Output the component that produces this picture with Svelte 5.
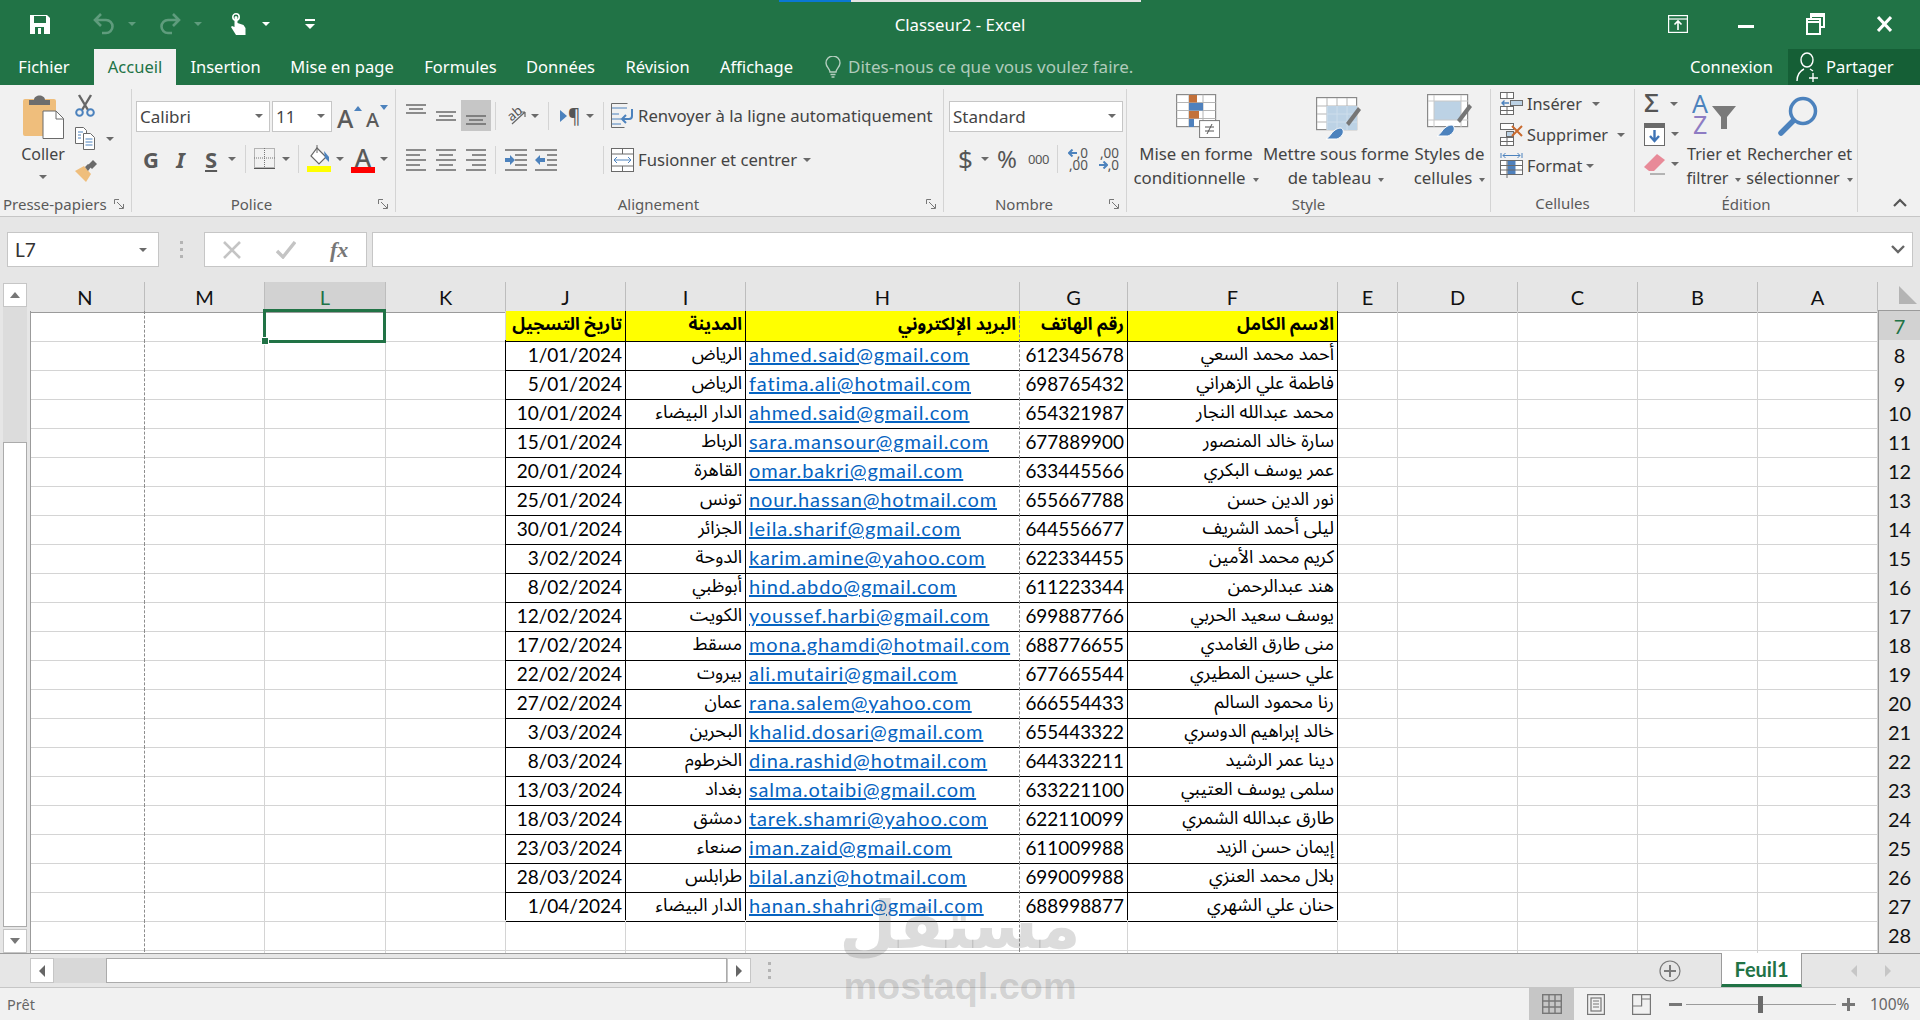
<script>
  const cols = ['N','M','L','K','J','I','H','G','F','E','D','C','B','A'];
  const head = ['تاريخ التسجيل','المدينة','البريد الإلكتروني','رقم الهاتف','الاسم الكامل'];
  const data = [
    ['1/01/2024','الرياض','ahmed.said@gmail.com','612345678','أحمد محمد السعي'],
    ['5/01/2024','الرياض','fatima.ali@hotmail.com','698765432','فاطمة علي الزهراني'],
    ['10/01/2024','الدار البيضاء','ahmed.said@gmail.com','654321987','محمد عبدالله النجار'],
    ['15/01/2024','الرباط','sara.mansour@gmail.com','677889900','سارة خالد المنصور'],
    ['20/01/2024','القاهرة','omar.bakri@gmail.com','633445566','عمر يوسف البكري'],
    ['25/01/2024','تونس','nour.hassan@hotmail.com','655667788','نور الدين حسن'],
    ['30/01/2024','الجزائر','leila.sharif@gmail.com','644556677','ليلى أحمد الشريف'],
    ['3/02/2024','الدوحة','karim.amine@yahoo.com','622334455','كريم محمد الأمين'],
    ['8/02/2024','أبوظبي','hind.abdo@gmail.com','611223344','هند عبدالرحمن'],
    ['12/02/2024','الكويت','youssef.harbi@gmail.com','699887766','يوسف سعيد الحربي'],
    ['17/02/2024','مسقط','mona.ghamdi@hotmail.com','688776655','منى طارق الغامدي'],
    ['22/02/2024','بيروت','ali.mutairi@gmail.com','677665544','علي حسين المطيري'],
    ['27/02/2024','عمان','rana.salem@yahoo.com','666554433','رنا محمود السالم'],
    ['3/03/2024','البحرين','khalid.dosari@gmail.com','655443322','خالد إبراهيم الدوسري'],
    ['8/03/2024','الخرطوم','dina.rashid@hotmail.com','644332211','دينا عمر الرشيد'],
    ['13/03/2024','بغداد','salma.otaibi@gmail.com','633221100','سلمى يوسف العتيبي'],
    ['18/03/2024','دمشق','tarek.shamri@yahoo.com','622110099','طارق عبدالله الشمري'],
    ['23/03/2024','صنعاء','iman.zaid@gmail.com','611009988','إيمان حسن الزيد'],
    ['28/03/2024','طرابلس','bilal.anzi@hotmail.com','699009988','بلال محمد العنزي'],
    ['1/04/2024','الدار البيضاء','hanan.shahri@gmail.com','688998877','حنان علي الشهري']
  ];
  const rows = [7, ...data.map((_, i) => i + 8), 28, 29];
  function cellText(r, c) {
    if (c < 4 || c > 8) return '';
    if (r === 7) return head[c - 4];
    if (r >= 8 && r <= 27) return data[r - 8][c - 4];
    return '';
  }
  function cellClass(r, c) {
    let k = 'c';
    if (c === 0) k += ' pb';
    if (c === 6) k += ' pb';
    const inTable = r >= 7 && r <= 27;
    if (inTable && c >= 4 && c <= 8) {
      k += r === 7 ? ' yellow' : '';
      k += ' tb';
      if (c !== 6) k += ' tr';
      if (r === 7) k += ' hd';
      else if (c === 5 || c === 8) k += ' ar';
      else if (c === 4) k += ' date';
      else if (c === 7) k += ' num';
      else if (c === 6) k += ' mail';
    }
    if (c === 3 && r >= 8 && r <= 27) k += ' tr';
    return k;
  }
</script>

<div class="app">
  <header class="title">
    <div class="strip"></div>
    <div class="titlerow">
      <div class="qat">
        <svg class="ml-30" width="20" height="20" viewBox="0 0 20 20"><path d="M0 1h17l3 3v16H0z" fill="#fff"/><rect x="4" y="2" width="12" height="7" fill="#217346"/><rect x="5" y="13" width="9" height="7" fill="#217346"/><rect x="8" y="14" width="3" height="6" fill="#fff"/></svg>
        <svg class="ml-43" width="21" height="22" viewBox="0 0 21 22" fill="none" stroke="#5f9c7d" stroke-width="2.600"><path d="M8 1 2 7l6 6M2 7h11a6 6 0 0 1 0 13H9"/></svg>
        <i class="caret dim ml-14"></i>
        <svg class="ml-24" width="21" height="22" viewBox="0 0 21 22" fill="none" stroke="#5f9c7d" stroke-width="2.600"><path d="m13 1 6 6-6 6M19 7H8a6 6 0 0 0 0 13h4"/></svg>
        <i class="caret dim ml-13"></i>
        <svg class="ml-28" width="17" height="22" viewBox="0 0 17 22"><circle cx="6" cy="4" r="3.200" fill="none" stroke="#fff" stroke-width="1.600"/><path d="M4.500 4.500a1.500 1.500 0 0 1 3 0V10l6 2 2 3v7H6L1 14l1-1 2.500 1z" fill="#fff"/></svg>
        <i class="caret white ml-15"></i>
        <svg class="ml-35" width="10" height="12" viewBox="0 0 10 12" fill="#fff"><rect x="0" y="1" width="10" height="2"/><path d="M0 6h10l-5 5z"/></svg>
      </div>
      <div class="doc">Classeur2 - Excel</div>
      <div class="win">
        <svg width="20" height="18" viewBox="0 0 20 18" fill="none" stroke="#fff" stroke-width="1.200"><rect x=".6" y=".6" width="18.800" height="16.800"/><path d="M1 4h18"/><path d="M10 15V6M6.500 9.500 10 6l3.500 3.500" stroke-width="1.600"/></svg>
        <i class="wmin ml-50"></i>
        <svg class="ml-52" width="19" height="22" viewBox="0 0 19 22" fill="none" stroke="#fff" stroke-width="2"><path d="M5 5V1h13v13h-4"/><rect x="1" y="6" width="13" height="15"/><path d="M1 9h13M5 3h13"/></svg>
        <svg class="ml-52" width="15" height="16" viewBox="0 0 15 16" stroke="#fff" stroke-width="3"><path d="M1 1l13 14M14 1 1 15"/></svg>
      </div>
    </div>
    <nav class="tabs">
      <span class="tab t-fichier">Fichier</span>
      <span class="tab t-accueil">Accueil</span>
      <span class="tab t-ins">Insertion</span>
      <span class="tab t-mise">Mise en page</span>
      <span class="tab t-form">Formules</span>
      <span class="tab t-don">Données</span>
      <span class="tab t-rev">Révision</span>
      <span class="tab t-aff">Affichage</span>
      <svg class="ml-18" width="16" height="22" viewBox="0 0 16 22" fill="none" stroke="#b5cfc0" stroke-width="1.400"><path d="M5 16c0-3-4-5-4-9a7 7 0 0 1 14 0c0 4-4 6-4 9z"/><path d="M5.500 18.500h5M6.500 21h3" stroke-width="1.600"/></svg>
      <span class="tell">Dites-nous ce que vous voulez faire.</span>
      <span class="conn">Connexion</span>
      <span class="share">
        <svg width="24" height="30" viewBox="0 0 24 30" fill="none" stroke="#fff" stroke-width="1.400"><ellipse cx="11" cy="8" rx="6" ry="7"/><path d="M1 29c0-7 3-10 7-12M14 17l3 2M17 21v9M13 26h9"/></svg>
        <span>Partager</span>
      </span>
    </nav>
  </header>

  <section class="ribbon">
    <div class="group g-clip">
      <div class="body clip">
        <div class="coller">
          <svg width="41" height="45" viewBox="0 0 41 45"><rect x="0" y="5" width="33" height="37" rx="2" fill="#efbe7c"/><path d="M6 6h5c0-6 11-6 11 0h5v5H6z" fill="#6d6d6d"/><path d="M20 17h13l7.500 7.500V44.500H20z" fill="#fff" stroke="#6a6a6a"/><path d="M33 17v8h7.500" fill="none" stroke="#6a6a6a"/></svg>
          <span class="cl">Coller</span>
          <i class="caret"></i>
        </div>
        <div class="clip-small">
          <svg width="20" height="23" viewBox="0 0 20 23" fill="none"><path d="M4 1l9 15M16 1 7 16" stroke="#666" stroke-width="2.400"/><circle cx="4.500" cy="18.500" r="3.300" stroke="#4c82bd" stroke-width="2"/><circle cx="15.500" cy="18.500" r="3.300" stroke="#4c82bd" stroke-width="2"/></svg>
          <div class="copy">
            <svg width="20" height="23" viewBox="0 0 20 23" fill="#fff" stroke="#6a6a6a"><path d="M.5.500h8l3 3v13H.5z"/><path d="M8.500 6.500h7l4 4v12h-11z"/><path d="M3 5h5M3 8h3M3 11h3" stroke="#4c82bd"/><path d="M10.500 12h7M10.500 15h7M10.500 18h7" stroke="#4c82bd"/></svg>
            <i class="caret ml-11"></i>
          </div>
          <svg width="23" height="22" viewBox="0 0 23 22"><path d="M0 11 9 6l7 8-5 8z" fill="#efbe7c"/><path d="m10 7 3-3 3 3-3 4zM13 5l5-5 4 4-5 5z" fill="#6a6a6a"/></svg>
        </div>
      </div>
      <footer class="glabel">Presse-papiers<svg class="launch" width="11" height="11" viewBox="0 0 11 11" fill="none" stroke="#777"><path d="M.5 5V.5H5M3 3l6 6M9.500 5v4.500H5"/></svg></footer>
    </div>

    <div class="group g-police">
      <div class="body">
        <div class="rowtop r1">
          <span class="box fontbox ml-4">Calibri<i class="caret"></i></span>
          <span class="box sizebox ml-2">11<i class="caret"></i></span>
          <span class="growa ml-5">A<svg class="tri" width="8" height="5" viewBox="0 0 8 5"><path d="M0 5h8L4 0z" fill="#4c82bd"/></svg></span>
          <span class="shrinka ml-12">A<svg class="tri" width="8" height="5" viewBox="0 0 8 5"><path d="M0 0h8L4 5z" fill="#4c82bd"/></svg></span>
        </div>
        <div class="rowbot">
          <span class="fmt b ml-11">G</span>
          <span class="fmt it ml-17">I</span>
          <span class="fmt u ml-19">S</span>
          <i class="caret ml-12"></i>
          <i class="vsep ml-9"></i>
          <svg class="ml-8" width="21" height="21" viewBox="0 0 21 21" fill="none" stroke="#777" stroke-dasharray="1 1"><rect x=".5" y=".5" width="20" height="19"/><path d="M10.500 0v20M0 10h21"/><path d="M0 20.500h21" stroke-dasharray="none" stroke="#555"/></svg>
          <i class="caret ml-7"></i>
          <i class="vsep ml-8"></i>
          <svg class="ml-8" width="24" height="28" viewBox="0 0 24 28"><path d="m10 3 9 9-7 7-8-8z" fill="#fff" stroke="#666" stroke-width="1.200"/><path d="M10 0v8" stroke="#666"/><path d="m17 6 5 6v5l-4-4z" fill="#4c82bd"/><rect y="21" width="24" height="6" fill="#ff0"/></svg>
          <i class="caret ml-5"></i>
          <span class="colA ml-7">A<i class="redbar"></i></span>
          <i class="caret ml-5"></i>
        </div>
      </div>
      <footer class="glabel">Police<svg class="launch" width="11" height="11" viewBox="0 0 11 11" fill="none" stroke="#777"><path d="M.5 5V.5H5M3 3l6 6M9.500 5v4.500H5"/></svg></footer>
    </div>

    <div class="group g-align">
      <div class="body">
        <div class="rowtop">
          <svg class="ml-10 al-t" width="20" height="10" viewBox="0 0 20 10" stroke="#6a6a6a" stroke-width="1.500"><path d="M0 1h20M3 5h14M0 9h20"/></svg>
          <svg class="ml-10 al-m" width="20" height="10" viewBox="0 0 20 10" stroke="#6a6a6a" stroke-width="1.500"><path d="M0 1h20M3 5h14M0 9h20"/></svg>
          <span class="activeb ml-5"><svg width="20" height="10" viewBox="0 0 20 10" stroke="#6a6a6a" stroke-width="1.500"><path d="M0 1h20M3 5h14M0 9h20"/></svg></span>
          <i class="vsep ml-4"></i>
          <svg class="ml-11 orient" width="20" height="22" viewBox="0 0 20 22"><text x="1" y="13" font-size="13" font-family="'Noto Sans',sans-serif" fill="#555" transform="rotate(-40 8 10)">ab</text><path d="M5 19 18 7M18 7v5M18 7h-5" fill="none" stroke="#666" stroke-width="1.200"/></svg>
          <i class="caret ml-4"></i>
          <i class="vsep ml-9"></i>
          <span class="pil ml-11"><svg width="7" height="12" viewBox="0 0 7 12"><path d="M0 0l7 6-7 6z" fill="#4c82bd"/></svg>¶</span>
          <i class="caret ml-6"></i>
          <i class="vsep ml-9"></i>
          <svg class="ml-7" width="23" height="26" viewBox="0 0 23 26" fill="none" stroke="#6a6a6a"><path d="M.5.500h16M.5.500v24h13"/><path d="M1 5h15M1 11h7M1 16h9M1 21h9" stroke="#4c82bd"/><path d="M21 6v7a3 3 0 0 1-3 3h-6" stroke="#4c82bd" stroke-width="2"/><path d="m15 12-4 4 4 4" stroke="#4c82bd" stroke-width="2"/></svg>
          <span class="lbl w294 ml-4">Renvoyer à la ligne automatiquement</span>
        </div>
        <div class="rowbot down1">
          <svg class="ml-10" width="20" height="22" viewBox="0 0 20 22" stroke="#6a6a6a" stroke-width="1.500"><path d="M0 1h20M0 6h14M0 11h20M0 16h14M0 21h20"/></svg>
          <svg class="ml-10" width="20" height="22" viewBox="0 0 20 22" stroke="#6a6a6a" stroke-width="1.500"><path d="M0 1h20M3 6h14M0 11h20M3 16h14M0 21h20"/></svg>
          <svg class="ml-10" width="20" height="22" viewBox="0 0 20 22" stroke="#6a6a6a" stroke-width="1.500"><path d="M0 1h20M6 6h14M0 11h20M6 16h14M0 21h20"/></svg>
          <i class="vsep ml-9"></i>
          <svg class="ml-9" width="22" height="22" viewBox="0 0 22 22"><path d="M0 1h22M10 6h12M10 11h12M10 16h12M0 21h22" stroke="#6a6a6a" stroke-width="1.500"/><path d="M0 9h5V6l5 5-5 5v-3H0z" fill="#4c82bd"/></svg>
          <svg class="ml-8" width="22" height="22" viewBox="0 0 22 22"><path d="M0 1h22M12 6h10M12 11h10M12 16h10M0 21h22" stroke="#6a6a6a" stroke-width="1.500"/><path d="M10 9H5V6l-5 5 5 5v-3h5z" fill="#4c82bd"/></svg>
          <i class="vsep ml-46"></i>
          <svg class="ml-7" width="23" height="24" viewBox="0 0 23 24" fill="#fff" stroke="#6a6a6a"><rect x=".5" y=".5" width="22" height="23"/><path d="M11.500 0v6M11.500 18v6M0 6h23M0 18h23"/><path d="M3 12h17M6 9l-3 3 3 3M17 9l3 3-3 3" stroke="#4c82bd" fill="none"/></svg>
          <span class="lbl w156 ml-4">Fusionner et centrer</span>
          <i class="caret ml-9"></i>
        </div>
      </div>
      <footer class="glabel">Alignement<svg class="launch" width="11" height="11" viewBox="0 0 11 11" fill="none" stroke="#777"><path d="M.5 5V.5H5M3 3l6 6M9.500 5v4.500H5"/></svg></footer>
    </div>

    <div class="group g-num">
      <div class="body">
        <div class="rowtop r1">
          <span class="box stdbox ml-5">Standard<i class="caret"></i></span>
        </div>
        <div class="rowbot">
          <span class="dollar ml-14">$</span>
          <i class="caret ml-9"></i>
          <span class="pct ml-8">%</span>
          <span class="mil ml-11">000</span>
          <i class="vsep ml-8"></i>
          <span class="dec ml-9"><span class="decrow"><svg width="9" height="8" viewBox="0 0 9 8" fill="none" stroke="#4c82bd" stroke-width="2"><path d="M9 4H1M4.500.5 1 4l3.500 3.500"/></svg>,0</span><span class="decrow">,00</span></span>
          <span class="dec ml-10"><span class="decrow">,00</span><span class="decrow"><svg width="9" height="8" viewBox="0 0 9 8" fill="none" stroke="#4c82bd" stroke-width="2"><path d="M0 4h8M4.500.5 8 4 4.500 7.500"/></svg>,0</span></span>
        </div>
      </div>
      <footer class="glabel">Nombre<svg class="launch" width="11" height="11" viewBox="0 0 11 11" fill="none" stroke="#777"><path d="M.5 5V.5H5M3 3l6 6M9.500 5v4.500H5"/></svg></footer>
    </div>

    <div class="group g-style">
      <div class="body styles">
        <div class="big s1">
          <span class="ic">
            <svg width="44" height="44" viewBox="0 0 44 44"><g fill="#fff" stroke="#8a8a8a" stroke-width="1.200"><rect x=".6" y=".6" width="39" height="32"/></g><path d="M13 .6v32M27 .6v32M.6 8.500h39M.6 16.500h39M.6 24.500h39" stroke="#b5b5b5"/><rect x="13" y="1" width="8" height="7.500" fill="#c3713a"/><rect x="13" y="9" width="14" height="7.500" fill="#4f81bd"/><rect x="13" y="17" width="10" height="7.500" fill="#c3713a"/><rect x="13" y="25" width="5" height="8" fill="#4f81bd"/><rect x="23.600" y="26.600" width="20" height="17" fill="#fff" stroke="#777"/><path d="M29 33h9M29 37h9M36 30l-5 10" stroke="#555" fill="none"/></svg>
          </span>
          <span class="ln">Mise en forme</span>
          <span class="ln">conditionnelle<i class="caret sm"></i></span>
        </div>
        <div class="big s2">
          <span class="ic">
            <svg width="46" height="43" viewBox="0 0 46 43"><rect x=".6" y=".6" width="40" height="32" fill="#fff" stroke="#8a8a8a" stroke-width="1.200"/><path d="M11 1v32M21 1v32M31 1v32M1 9h40M1 17h40M1 25h40" stroke="#b5b5b5"/><path d="M11 9h30v24H11z" fill="#bcd2e5"/><path d="M11 9v24M21 9v24M31 9v24M11 17h30M11 25h30" stroke="#cdddeb"/><path d="m30 26 12-16 3 3-12 16z" fill="#767676"/><path d="M10 42c3-1 5-6 9-9 3-2 7-3 8 0s-1 7-6 9z" fill="#4c82bd" stroke="#fff"/></svg>
          </span>
          <span class="ln">Mettre sous forme</span>
          <span class="ln">de tableau<i class="caret sm"></i></span>
        </div>
        <div class="big s3">
          <span class="ic">
            <svg width="46" height="43" viewBox="0 0 46 43"><rect x=".6" y=".6" width="40" height="32" fill="#fff" stroke="#8a8a8a" stroke-width="1.200"/><rect x="7" y="7" width="27" height="19" fill="#bcd2e5"/><path d="M7 1v32M34 1v32M1 7h40M1 26h40" stroke="#c8c8c8"/><path d="m30 26 12-16 3 3-12 16z" fill="#767676"/><path d="M10 42c3-1 5-6 9-9 3-2 7-3 8 0s-1 7-6 9z" fill="#4c82bd" stroke="#fff"/></svg>
          </span>
          <span class="ln">Styles de</span>
          <span class="ln">cellules<i class="caret sm"></i></span>
        </div>
      </div>
      <footer class="glabel">Style</footer>
    </div>

    <div class="group g-cells">
      <div class="body cells">
        <div class="cellrow">
          <svg class="ml-9" width="23" height="23" viewBox="0 0 23 23" fill="#fff" stroke="#6a6a6a"><rect x=".5" y=".5" width="13" height="6"/><path d="M7 .5v6"/><rect x="10.500" y="8.500" width="12" height="5" fill="#bcd2e5"/><rect x=".5" y="14.500" width="13" height="8"/><path d="M7 14.500v8M0 18.500h13"/><path d="M9 11H2M4.500 8.500 2 11l2.500 2.500" stroke="#4c82bd" stroke-width="1.400" fill="none"/></svg>
          <span class="lbl ml-4">Insérer</span><i class="caret ml-10"></i>
        </div>
        <div class="cellrow">
          <svg class="ml-9" width="23" height="23" viewBox="0 0 23 23" fill="#fff" stroke="#6a6a6a"><rect x=".5" y=".5" width="13" height="6"/><rect x="6.500" y="8.500" width="7" height="5" fill="#bcd2e5"/><rect x=".5" y="14.500" width="13" height="8"/><path d="M7 14.500v8M0 18.500h13"/><path d="m12 3 10 10M22 3 12 13" stroke="#c96a2e" stroke-width="2" fill="none"/></svg>
          <span class="lbl ml-4">Supprimer</span><i class="caret ml-9"></i>
        </div>
        <div class="cellrow">
          <svg class="ml-9" width="23" height="25" viewBox="0 0 23 25" fill="#fff" stroke="#6a6a6a"><path d="M1 0v5M22 0v5M3 2.500h17M5.500 0 3 2.500 5.500 5M17.500 0 20 2.500 17.500 5" stroke="#4c82bd" fill="none"/><rect x=".5" y="7.500" width="22" height="14"/><rect x="7.500" y="8" width="8" height="13" fill="#4f81bd" stroke="none"/><path d="M.5 12.500h22M.5 17h22M7 7v18"/></svg>
          <span class="lbl ml-4">Format</span><i class="caret ml-4"></i>
        </div>
      </div>
      <footer class="glabel">Cellules</footer>
    </div>

    <div class="group g-edit">
      <div class="body edit">
        <div class="eda">
          <div class="edrow"><span class="sigma">Σ</span><i class="caret ml-5"></i></div>
          <div class="edrow"><svg width="21" height="23" viewBox="0 0 21 23"><rect x=".5" y=".5" width="20" height="22" fill="#fff" stroke="#6a6a6a"/><rect width="21" height="5" fill="#6a6a6a"/><path d="M10.500 7v11M6 13l4.500 5 4.500-5" fill="none" stroke="#3f74b5" stroke-width="2.400"/></svg><i class="caret ml-6"></i></div>
          <div class="edrow"><svg width="22" height="21" viewBox="0 0 22 21"><path d="M13 0l8 6-11 11H5l-5-4z" fill="#e88a98"/><path d="M6 20h15" stroke="#777"/></svg><i class="caret ml-5"></i></div>
        </div>
        <div class="big e1">
          <span class="ic up">
            <svg width="44" height="42" viewBox="0 0 44 42"><text x="0" y="19" font-size="25" font-family="'Noto Sans',sans-serif" fill="#4c82bd">A</text><text x="1" y="40" font-size="25" font-family="'Noto Sans',sans-serif" fill="#8e7cc3">Z</text><path d="M20 12h24l-9 11v12h-6V23z" fill="#7a7a7a"/></svg>
          </span>
          <span class="ln">Trier et</span>
          <span class="ln">filtrer<i class="caret sm"></i></span>
        </div>
        <div class="big e2">
          <span class="ic up">
            <svg width="40" height="40" viewBox="0 0 40 40" fill="none" stroke="#4c82bd"><circle cx="25" cy="15" r="12.500" stroke-width="3.500"/><path d="M15 25 3 37" stroke-width="5.500" stroke-linecap="round"/></svg>
          </span>
          <span class="ln">Rechercher et</span>
          <span class="ln">sélectionner<i class="caret sm"></i></span>
        </div>
      </div>
      <footer class="glabel">Édition</footer>
    </div>

    <div class="collapse">
      <svg width="14" height="9" viewBox="0 0 14 9" fill="none" stroke="#555" stroke-width="2.200"><path d="m1 8 6-6 6 6"/></svg>
    </div>
  </section>

  <section class="fbar">
    <div class="box namebox">L7<i class="caret"></i></div>
    <div class="grip"><i></i><i></i><i></i></div>
    <div class="box fxbox">
      <svg width="18" height="18" viewBox="0 0 18 18" stroke="#c4c4c4" stroke-width="2.600"><path d="m1 1 16 16M17 1 1 17"/></svg>
      <svg width="20" height="18" viewBox="0 0 20 18" fill="none" stroke="#c4c4c4" stroke-width="3.400"><path d="m1 10 6 6L19 1"/></svg>
      <span class="fx">fx</span>
    </div>
    <div class="box finput"><svg width="14" height="9" viewBox="0 0 14 9" fill="none" stroke="#666" stroke-width="2.400"><path d="m1 1 6 6 6-6"/></svg></div>
  </section>

  <section class="sheet">
    <div class="vscroll">
      <div class="sbtn"><i class="tri-u"></i></div>
      <div class="strack"></div>
      <div class="sthumb"></div>
      <div class="sbtn down"><i class="tri-d"></i></div>
    </div>
    <div class="grid">
      <div class="line hdr">
        {#each cols as col}
          <div class="ch" class:sel={col === 'L'} class:first={col === 'N'}>{col}</div>
        {/each}
        <div class="corner"><svg width="18" height="18" viewBox="0 0 18 18"><path d="M0 0l18 18H0z" fill="#b4b4b4"/></svg></div>
      </div>
      {#each rows as r}
        <div class="line">
          {#each cols as col, c}
            <div class={cellClass(r, c)}>
              {#if r === 7 && col === 'L'}<span class="cursor"><i class="handle"></i></span>{/if}
              {#if c === 6 && r > 7 && r <= 27}<span class="link">{cellText(r, c)}</span>{:else}{cellText(r, c)}{/if}
            </div>
          {/each}
          <div class="rh" class:sel={r === 7}>{r}</div>
        </div>
      {/each}
    </div>
  </section>

  <section class="sbar">
    <div class="hbtn ml-30"><i class="tri-l"></i></div>
    <div class="htrack"></div>
    <div class="hthumb"></div>
    <div class="hbtn"><i class="tri-r"></i></div>
    <div class="grip h ml-15"><i></i><i></i><i></i></div>
    <svg class="plus" width="22" height="22" viewBox="0 0 22 22" fill="none" stroke="#7a7a7a"><circle cx="11" cy="11" r="10" stroke-width="1.200"/><path d="M11 5v12M5 11h12" stroke-width="2"/></svg>
    <div class="sheettab">Feuil1</div>
    <i class="tri-l pale ml-49"></i>
    <i class="tri-r pale ml-28"></i>
  </section>

  <footer class="status">
    <span class="ready">Prêt</span>
    <span class="vbtn">
      <svg width="20" height="20" viewBox="0 0 20 20" fill="none" stroke="#777" stroke-width="1.400"><rect x=".7" y=".7" width="18.600" height="18.600"/><path d="M7 0v20M13 0v20M0 7h20M0 13h20"/></svg>
    </span>
    <svg class="ml-13" width="18" height="21" viewBox="0 0 18 21" fill="none" stroke="#777" stroke-width="1.200"><rect x=".6" y=".6" width="16.800" height="19.800"/><rect x="4" y="4" width="10" height="13"/><path d="M6 7h6M6 10h6M6 13h6"/></svg>
    <svg class="ml-27" width="19" height="21" viewBox="0 0 19 21" fill="none" stroke="#777" stroke-width="1.200"><path d="M.6.600h17.800v19.800H.6zM.6 12h9V.6M9.600 5h9"/></svg>
    <i class="zm ml-18"></i>
    <div class="slider ml-4"><i class="thumb"></i></div>
    <span class="zp ml-6"></span>
    <span class="pctz ml-15">100%</span>
  </footer>

  <div class="mark"><span class="mk-ar">مستقل</span><span class="mk-en">mostaql.com</span></div>
</div>

<style>
  :global(body) { margin: 0; background: #e6e6e6; }
  .app {
    position: relative; width: 1920px; height: 1020px; overflow: hidden;
    display: flex; flex-direction: column;
    font-family: "Noto Sans", sans-serif; font-size: 15.500px; color: #444;
    background: #e6e6e6;
  }
  i { display: block; font-style: normal; }
  svg { display: block; flex: none; }

  .ml-2 { margin-left: 2px; } .ml-4 { margin-left: 4px; } .ml-5 { margin-left: 5px; }
  .ml-6 { margin-left: 6px; } .ml-7 { margin-left: 7px; } .ml-8 { margin-left: 8px; }
  .ml-9 { margin-left: 9px; } .ml-10 { margin-left: 10px; } .ml-11 { margin-left: 11px; }
  .ml-12 { margin-left: 12px; } .ml-13 { margin-left: 13px; } .ml-14 { margin-left: 14px; }
  .ml-15 { margin-left: 15px; } .ml-17 { margin-left: 17px; } .ml-18 { margin-left: 18px; }
  .ml-19 { margin-left: 19px; } .ml-24 { margin-left: 24px; } .ml-27 { margin-left: 27px; }
  .ml-28 { margin-left: 28px; } .ml-30 { margin-left: 30px; } .ml-35 { margin-left: 35px; }
  .ml-43 { margin-left: 43px; } .ml-46 { margin-left: 46px; } .ml-49 { margin-left: 49px; }
  .ml-50 { margin-left: 50px; } .ml-52 { margin-left: 52px; }

  .caret {
    flex: none; width: 0; height: 0;
    border-left: 4px solid transparent; border-right: 4px solid transparent;
    border-top: 4.500px solid #6a6a6a;
  }
  .caret.dim { border-top-color: #5f9c7d; }
  .caret.white { border-top-color: #fff; }
  .caret.sm { display: inline-block; vertical-align: middle; margin-left: 7px; border-left-width: 3.500px; border-right-width: 3.500px; border-top-width: 4px; }
  .vsep { flex: none; width: 1px; height: 28px; background: #d4d4d4; }

  /* Title */
  .title { background: #217346; color: #fff; flex: none; height: 85px; }
  .strip { height: 2px; width: 362px; margin-left: 779px; background: linear-gradient(90deg, #0a78d4 0 72px, #e4e4e4 72px); }
  .titlerow { height: 47px; display: grid; grid-template-columns: 1fr auto 1fr; align-items: center; padding-bottom: 4px; box-sizing: border-box; }
  .qat { display: flex; align-items: center; }
  .doc { font-size: 16.800px; padding-top: 2px; }
  .win { display: flex; align-items: center; justify-content: flex-end; padding-right: 28px; }
  .wmin { width: 16px; height: 3px; background: #fff; margin-top: 6px; }
  .tabs { height: 36px; display: flex; align-items: center; font-size: 16.500px; }
  .tab { display: flex; align-items: center; justify-content: center; height: 100%; flex: none; padding-bottom: 1px; box-sizing: border-box; }
  .t-fichier { width: 88px; margin-right: 6px; }
  .t-accueil { width: 82px; background: #f1f1f1; color: #217346; }
  .t-ins { width: 99px; } .t-mise { width: 134px; } .t-form { width: 103px; }
  .t-don { width: 97px; } .t-rev { width: 97px; } .t-aff { width: 101px; }
  .tell { margin-left: 7px; color: #b0cbbb; font-size: 17px; padding-bottom: 2px; }
  .conn { margin-left: auto; margin-right: 15px; padding-bottom: 2px; }
  .share { width: 132px; height: 100%; background: #155f36; display: flex; align-items: center; gap: 6px; padding: 0 0 1px 8px; box-sizing: border-box; }

  /* Ribbon */
  .ribbon { flex: none; height: 132px; box-sizing: border-box; background: #f1f1f1; border-bottom: 1px solid #c6c6c6; display: flex; }
  .group { flex: none; box-sizing: border-box; height: 123px; margin-top: 4px; border-right: 1px solid #d4d4d4; display: flex; flex-direction: column; }
  .g-clip { width: 132px; } .g-police { width: 264px; } .g-align { width: 548px; }
  .g-num { width: 183px; } .g-style { width: 364px; } .g-cells { width: 144px; } .g-edit { width: 223px; }
  .body { height: 104px; flex: none; }
  .glabel { height: 19px; line-height: 22px; text-align: center; position: relative; font-size: 15px; color: #5a5a5a; }
  .launch { position: absolute; right: 6px; top: 6px; }
  .g-clip .glabel { text-align: left; padding-left: 3px; }
  .g-police .glabel { padding-right: 24px; }
  .g-align .glabel { padding-right: 22px; }
  .g-num .glabel { padding-right: 22px; }

  .clip { display: flex; padding-top: 5px; box-sizing: border-box; }
  .coller { width: 60px; margin-left: 13px; display: flex; flex-direction: column; align-items: center; }
  .cl { height: 24px; line-height: 24px; margin-top: 3px; font-size: 16px; }
  .coller .caret { margin-top: 9px; }
  .clip-small { margin-left: 2px; display: flex; flex-direction: column; gap: 10px; }
  .copy { display: flex; align-items: center; }

  .rowtop { display: flex; align-items: center; height: 31px; margin-top: 11px; }
  .rowtop.r1 { margin-top: 12px; }
  .rowbot { display: flex; align-items: center; height: 31px; margin-top: 12px; }
  .rowbot.down1 { margin-top: 13px; }
  .r1 + .rowbot { margin-top: 11px; }
  .box { background: #fff; border: 1px solid #c6c6c6; box-sizing: border-box; display: flex; align-items: center; justify-content: space-between; flex: none; color: #444; }
  .fontbox, .sizebox, .stdbox { height: 31px; padding: 0 6px 0 3px; font-size: 17px; color: #444; }
  .fontbox .caret, .sizebox .caret, .stdbox .caret { margin-top: -2px; }
  .fontbox { width: 134px; } .sizebox { width: 60px; } .stdbox { width: 174px; }
  .growa, .shrinka { position: relative; font-weight: 500; line-height: 1; color: #5a5a5a; }
  .growa { font-size: 25px; width: 17px; margin-top: 3px; }
  .shrinka { font-size: 20px; width: 14px; margin-top: 7px; }
  .tri { position: absolute; left: 100%; top: 0; }
  .shrinka .tri { top: -5px; }
  .fmt { font-size: 22px; color: #595959; text-align: center; line-height: 1; }
  .b { width: 15px; font-weight: 700; }
  .it { width: 11px; font-style: italic; font-weight: 700; }
  .u { width: 11px; font-weight: 700; text-decoration: underline; }
  .colA { position: relative; width: 24px; text-align: center; font-size: 25px; line-height: 24px; font-weight: 500; color: #595959; height: 28px; }
  .redbar { position: absolute; left: 0; bottom: 0; width: 24px; height: 6px; background: #f00; }

  .al-t { margin-top: -13px; } .al-m { margin-top: 0; }
  .orient { overflow: visible; }
  .activeb { width: 30px; height: 31px; background: #c6c6c6; display: flex; justify-content: center; align-items: flex-end; padding-bottom: 6px; box-sizing: border-box; flex: none; }
  .pil { width: 20px; display: flex; align-items: center; font-size: 19px; color: #555; gap: 1px; }
  .lbl { flex: none; font-size: 16.300px; color: #444; white-space: nowrap; }
  .w294 { width: 294px; font-size: 16.700px; } .w156 { width: 156px; font-size: 16.700px; }

  .dollar { width: 14px; font-size: 26px; color: #555; text-align: center; line-height: 1; }
  .pct { width: 20px; font-size: 24px; color: #555; text-align: center; line-height: 1; }
  .mil { width: 21px; font-size: 13px; color: #555; text-align: center; letter-spacing: -.4px; }
  .dec { width: 21px; display: flex; flex-direction: column; align-items: flex-end; font-size: 13.500px; line-height: 12px; color: #555; }
  .decrow { display: flex; align-items: center; }

  .styles { display: flex; padding-left: 3px; box-sizing: border-box; }
  .big { flex: none; display: flex; flex-direction: column; align-items: center; white-space: nowrap; font-size: 16.800px; }
  .s1 { width: 132px; } .s2 { width: 148px; } .s3 { width: 79px; }
  .s1 .ic { padding: 0 0 4px 4px; }
  .s2 .ic { padding-left: 5px; }
  .s3 .ic { padding-bottom: 5px; }
  .ic { height: 53px; display: flex; align-items: flex-end; padding-bottom: 2px; box-sizing: border-box; }
  .ic.up { padding-bottom: 6px; }
  .e2 .ic { padding-right: 3px; }
  .ln { height: 24px; line-height: 24px; }

  .cells { display: flex; flex-direction: column; margin-top: -1px; }
  .cellrow { height: 31px; display: flex; align-items: center; }
  .edit { display: flex; }
  .eda { width: 49px; padding-left: 9px; box-sizing: border-box; flex: none; }
  .edrow { height: 30px; display: flex; align-items: center; }
  .sigma { width: 21px; font-size: 26px; line-height: 1; color: #555; font-weight: 500; margin-top: -4px; }
  .e1 { width: 60px; font-size: 16.200px; } .e2 { width: 111px; font-size: 16.200px; }
  .collapse { flex: 1; display: flex; justify-content: flex-end; align-items: flex-end; padding: 0 13px 9px 0; }

  /* Formula bar */
  .fbar { flex: none; height: 65px; display: flex; padding: 15px 7px 15px 7px; box-sizing: border-box; }
  .namebox { width: 152px; padding: 0 11px 0 7px; font-size: 19px; font-family: Lato, sans-serif; color: #333; }
  .grip { width: 45px; display: flex; flex-direction: column; align-items: center; justify-content: center; gap: 4px; }
  .grip i { width: 3px; height: 3px; background: #b4b4b4; }
  .grip.h { width: 6px; }
  .fxbox { width: 163px; justify-content: flex-start; gap: 35px; padding-left: 18px; }
  .fx { font-family: "Liberation Serif", serif; font-style: italic; font-weight: 700; font-size: 22px; color: #777; margin-left: -1px; }
  .finput { flex: 1; margin-left: 5px; justify-content: flex-end; padding-right: 7px; }

  /* Sheet */
  .sheet { flex: none; height: 671px; display: flex; overflow: hidden; }
  .vscroll { width: 30px; box-sizing: border-box; padding: 1px 3px 0 3px; flex: none; display: flex; flex-direction: column; }
  .sbtn { height: 24px; flex: none; background: #fff; border: 1px solid #c6c6c6; box-sizing: border-box; display: flex; align-items: center; justify-content: center; }
  .sbtn.down { margin-top: 2px; }
  .strack { height: 135px; flex: none; background: #dcdcdc; }
  .sthumb { flex: 1; background: #fff; border: 1px solid #ababab; box-sizing: border-box; }
  .tri-u, .tri-d, .tri-l, .tri-r { width: 0; height: 0; flex: none; }
  .tri-u { border-left: 5.500px solid transparent; border-right: 5.500px solid transparent; border-bottom: 6px solid #777; }
  .tri-d { border-left: 5.500px solid transparent; border-right: 5.500px solid transparent; border-top: 6px solid #777; }
  .tri-l { border-top: 6px solid transparent; border-bottom: 6px solid transparent; border-right: 6px solid #666; }
  .tri-r { border-top: 6px solid transparent; border-bottom: 6px solid transparent; border-left: 6px solid #666; }
  .tri-l.pale { border-right-color: #c6c6c6; }
  .tri-r.pale { border-left-color: #c6c6c6; }

  .grid { flex: none; width: 1890px; box-sizing: border-box; }
  .line { display: grid; height: 29px; grid-template-columns: 115px 120px 121px 120px 120px 120px 274px 108px 210px 60px 120px 120px 120px 120px 42px; background: #fff; }
  .hdr { background: #e6e6e6; }
  .ch { box-sizing: border-box; border-right: 1px solid #bdbdbd; border-bottom: 1px solid #9b9b9b; font-family: Lato, sans-serif; font-size: 20px; color: #111; text-align: center; line-height: 30px; background: #e6e6e6; }
  .ch.first { padding-right: 4px; }
  .ch.sel { background: #d2d2d2; color: #217346; }
  .corner { display: flex; justify-content: flex-end; align-items: flex-end; padding: 0 3px 6px 0; border-bottom: 1px solid #9b9b9b; box-sizing: border-box; height: 29px; overflow: hidden; background: #e6e6e6; }

  .c {
    position: relative; box-sizing: border-box; min-width: 0;
    border-right: 1px solid #d4d4d4; border-bottom: 1px solid #d4d4d4;
    font-family: Lato, "Noto Sans Arabic", sans-serif; font-size: 18.800px; color: #000;
    line-height: 29px; white-space: nowrap; text-align: right; padding: 0 3px; overflow: visible;
  }
  .line > .c:first-child { border-left: 1px solid #9b9b9b; }
  .c.pb { border-right: 1px dashed #8d8d8d; }
  .c.tb { border-bottom-color: #000; }
  .c.tr { border-right-color: #000; }
  .c.yellow { background: #ff0; }
  .c.ar { direction: rtl; font-family: "Noto Sans Arabic", "DejaVu Sans", sans-serif; font-size: 18.200px; line-height: 29px; }
  .c.hd { font-family: "Noto Sans Arabic", "DejaVu Sans", sans-serif; font-weight: 700; font-size: 17.500px; direction: rtl; line-height: 27px; }
  .c.date { font-family: Lato, sans-serif; font-size: 19px; }
  .c.num { font-family: Lato, sans-serif; font-size: 18.900px; }
  .c.mail { text-align: left; font-family: Lato, sans-serif; font-size: 20px; letter-spacing: .85px; }
  .link { color: #0563c1; text-decoration: underline; }
  .cursor { position: absolute; left: -2px; top: -2px; right: -1px; bottom: -2px; border: 3px solid #217346; z-index: 2; }
  .handle { position: absolute; left: -5px; bottom: -5px; width: 6px; height: 6px; background: #217346; border: 1px solid #fff; }

  .rh { box-sizing: border-box; background: #e6e6e6; border-left: 1px solid #9b9b9b; border-bottom: 1px solid #bdbdbd; font-family: Lato, sans-serif; font-size: 20px; color: #111; text-align: center; line-height: 30px; }
  .rh.sel { background: #d2d2d2; color: #217346; }

  /* Sheet tab bar */
  .sbar { flex: none; height: 35px; box-sizing: border-box; border-top: 1px solid #9b9b9b; border-bottom: 1px solid #c6c6c6; display: flex; align-items: center; background: #e6e6e6; }
  .hbtn { flex: none; width: 24px; height: 25px; background: #fff; border: 1px solid #c6c6c6; box-sizing: border-box; display: flex; align-items: center; justify-content: center; }
  .htrack { flex: none; width: 52px; height: 25px; background: #d8d8d8; }
  .hthumb { flex: none; width: 621px; height: 25px; background: #fff; border: 1px solid #ababab; box-sizing: border-box; }
  .plus { margin-left: 887px; }
  .sheettab { margin-left: 40px; flex: none; width: 81px; height: 34px; margin-top: -1px; background: #fff; border-left: 1px solid #9b9b9b; border-right: 1px solid #9b9b9b; border-bottom: 3px solid #217346; box-sizing: border-box; color: #217346; font-family: Lato, sans-serif; font-weight: 700; font-size: 20px; text-align: center; line-height: 32px; }

  /* Status bar */
  .status { flex: 1; background: #f1f1f1; display: flex; align-items: center; color: #666; }
  .ready { width: 1522px; flex: none; margin-left: 7px; font-size: 14.500px; }
  .vbtn { flex: none; width: 45px; height: 100%; background: #c6c6c6; display: flex; align-items: center; justify-content: center; }
  .zm { width: 13px; height: 3px; background: #777; flex: none; }
  .slider { position: relative; width: 150px; height: 1px; background: #9b9b9b; flex: none; }
  .thumb { position: absolute; left: 72px; top: -8px; width: 5px; height: 17px; background: #6a6a6a; }
  .zp { position: relative; width: 13px; height: 13px; flex: none; background: linear-gradient(#777,#777) center/13px 3px no-repeat, linear-gradient(#777,#777) center/3px 13px no-repeat; }
  .pctz { font-size: 15.500px; color: #666; white-space: nowrap; }

  .mark { position: absolute; left: 845px; top: 886px; width: 230px; display: flex; flex-direction: column; align-items: center; color: rgba(110,110,110,.24); pointer-events: none; }
  .mk-ar { font-family: "DejaVu Sans", sans-serif; font-weight: 700; font-size: 66px; line-height: 80px; height: 80px; white-space: nowrap; }
  .mk-en { font-family: "Liberation Sans", sans-serif; font-weight: 700; font-size: 37.800px; line-height: 40px; }
</style>
